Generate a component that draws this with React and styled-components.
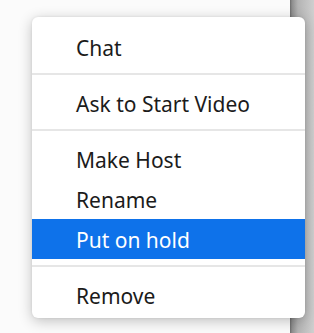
import React from "react";
import styled, { createGlobalStyle } from "styled-components";

const Global = createGlobalStyle`
  html, body { margin: 0; padding: 0; }
  body { width: 314px; height: 333px; overflow: hidden; background: #fbfbfb; font-family: "Noto Sans", "Open Sans", sans-serif; }
`;

const Page = styled.div`
  position: relative;
  display: flex;
  width: 314px;
  height: 333px;
`;

const Main = styled.div`
  flex: 1;
  background: #fbfbfb;
`;

const Edge = styled.div`
  width: 24px;
  background: linear-gradient(to right, #6c6c6c 0, #8e8e8e 2px, #b4b4b4 8px, #cfcfcf 100%);
`;

const Menu = styled.ul`
  position: absolute;
  left: 32px;
  top: 17px;
  width: 273px;
  margin: 0;
  padding: 10px 0 3px;
  list-style: none;
  background: #ffffff;
  border-radius: 6px;
  box-shadow: 0 3px 14px rgba(0, 0, 0, 0.24), 0 0 3px rgba(0, 0, 0, 0.08);
`;

const Item = styled.li`
  height: 38px;
  line-height: 38px;
  padding: 2px 0 0 44px;
  font-size: 21px;
  color: ${(p) => (p.$active ? "#ffffff" : "#1b1b1b")};
  background: ${(p) => (p.$active ? "#0e72ea" : "transparent")};
  white-space: nowrap;
`;

const Separator = styled.li`
  height: 2px;
  margin: 6px 0 8px;
  background: #e6e6e6;
`;

export default function App() {
  return (
    <>
      <Global />
      <Page>
        <Main />
        <Edge />
        <Menu>
          <Item>Chat</Item>
          <Separator />
          <Item>Ask to Start Video</Item>
          <Separator />
          <Item>Make Host</Item>
          <Item>Rename</Item>
          <Item $active>Put on hold</Item>
          <Separator />
          <Item>Remove</Item>
        </Menu>
      </Page>
    </>
  );
}
